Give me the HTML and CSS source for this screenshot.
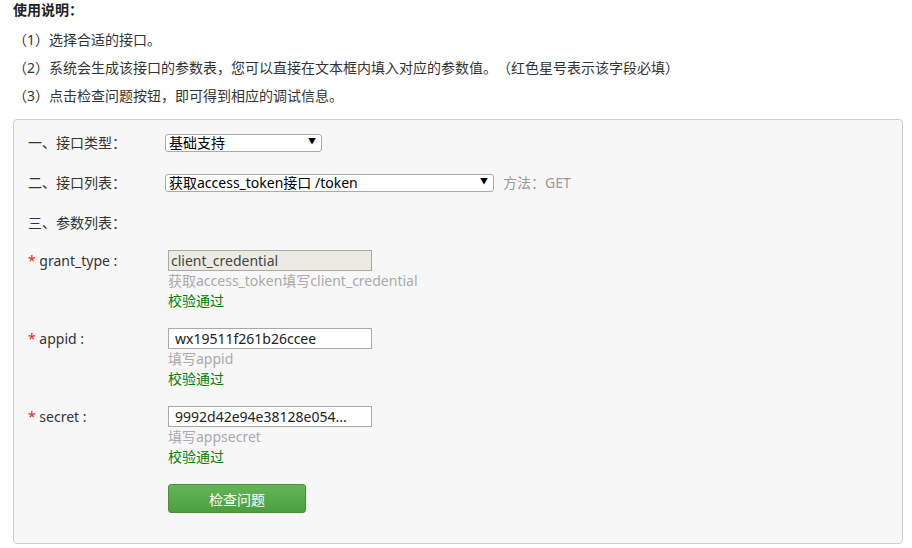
FILE: index.html
```html
<!DOCTYPE html>
<html lang="zh-CN">
<head>
  <meta charset="UTF-8" />
  <meta name="viewport" content="width=device-width, initial-scale=1" />
  <title>接口调试工具</title>
  <link rel="stylesheet" href="styles.css">
</head>
<body>
  <div class="page">
    <h3 class="intro-title">使用说明：</h3>
    <ul class="intro-list">
      <li>（1）选择合适的接口。</li>
      <li>（2）系统会生成该接口的参数表，您可以直接在文本框内填入对应的参数值。（红色星号表示该字段必填）</li>
      <li>（3）点击检查问题按钮，即可得到相应的调试信息。</li>
    </ul>

    <div class="panel">
      <div class="row">
        <label class="row-label">一、接口类型：</label>
        <span class="select-wrap type-select">
          <select>
            <option>基础支持</option>
          </select>
        </span>
      </div>

      <div class="row">
        <label class="row-label">二、接口列表：</label>
        <span class="select-wrap api-select">
          <select>
            <option>获取access_token接口 /token</option>
          </select>
        </span>
        <span class="method">方法：GET</span>
      </div>

      <div class="row row-last">
        <label class="row-label">三、参数列表：</label>
      </div>

      <div class="param">
        <label class="param-label"><span class="req">*</span> grant_type :</label>
        <div class="param-field">
          <input type="text" class="field disabled" value="client_credential" disabled />
          <div class="hint">获取access_token填写client_credential</div>
          <div class="ok">校验通过</div>
        </div>
      </div>

      <div class="param">
        <label class="param-label"><span class="req">*</span> appid :</label>
        <div class="param-field">
          <input type="text" class="field" value="wx19511f261b26ccee" />
          <div class="hint">填写appid</div>
          <div class="ok">校验通过</div>
        </div>
      </div>

      <div class="param">
        <label class="param-label"><span class="req">*</span> secret :</label>
        <div class="param-field">
          <input type="text" class="field" value="9992d42e94e38128e054..." />
          <div class="hint">填写appsecret</div>
          <div class="ok">校验通过</div>
        </div>
      </div>

      <div class="actions">
        <button class="btn-check">检查问题</button>
      </div>
    </div>
  </div>
</body>
</html>
```

FILE: styles.css
```css
/* Reset */
* {
  margin: 0; padding: 0; box-sizing: border-box;
  font-family: "Noto Sans", "Noto Sans CJK SC", sans-serif;
}
body {
  background: #fff;
  color: #333;
  font-size: 14px;
  text-spacing-trim: space-all;
}
.page {
  padding: 0 9px 0 13px;
}
/* Intro */
.intro-title {
  font-size: 14px;
  font-weight: bold;
  line-height: 20px;
  color: #222;
  margin-bottom: 6px;
}
.intro-list {
  list-style: none;
  margin-bottom: 9px;
}
.intro-list li {
  line-height: 28px;
  padding-left: 0;
}
/* Panel */
.panel {
  background: #f7f7f7;
  border: 1px solid #ccc;
  border-radius: 4px;
  padding: 11px 14px 30px;
}
.row {
  display: flex;
  align-items: center;
  height: 22px;
  margin-bottom: 18px;
}
.row-last {
  margin-bottom: 17px;
}
.row-label {
  width: 137px;
  flex-shrink: 0;
}
/* Selects */
.select-wrap {
  position: relative;
  display: inline-block;
}
.select-wrap select {
  appearance: none;
  -webkit-appearance: none;
  width: 100%;
  height: 18px;
  background: #fff;
  border: 1px solid #a9a9a9;
  border-radius: 3px;
  padding: 0 16px 0 3px;
  font-size: 14px;
  line-height: 16px;
  color: #000;
}
.select-wrap::after {
  content: "▼";
  position: absolute;
  right: 6px;
  top: 3px;
  font-size: 8px;
  line-height: 10px;
  color: #000;
  pointer-events: none;
}
.type-select {
  width: 157px;
}
.api-select {
  width: 329px;
}
.method {
  margin-left: 9px;
  color: #999;
}
/* Params */
.param {
  display: grid;
  grid-template-columns: 140px 1fr;
  margin-bottom: 18px;
}
.param-label {
  line-height: 21px;
  color: #333;
}
.req {
  color: #e22;
}
.field {
  display: block;
  width: 204px;
  height: 21px;
  border: 1px solid #a9a9a9;
  background: #fff;
  padding: 0 6px;
  font-size: 14px;
  color: #222;
}
.field.disabled {
  background: #ebebe4;
  padding: 0 2px;
  color: #444;
}
.hint {
  line-height: 20px;
  color: #aaa;
}
.ok {
  line-height: 19px;
  color: #008000;
}
/* Button */
.actions {
  padding-left: 140px;
}
.btn-check {
  width: 138px;
  height: 29px;
  border: 1px solid #45922f;
  border-radius: 3px;
  background: linear-gradient(#63b658, #4c9f40);
  color: #fff;
  font-size: 14px;
  cursor: pointer;
}
```
